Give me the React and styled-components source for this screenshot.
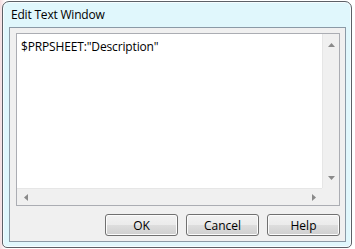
import React from "react";
import styled, { createGlobalStyle } from "styled-components";

const Global = createGlobalStyle`
  html, body { margin: 0; padding: 0; background: #ffffff; }
  body { font-family: "Open Sans", "Noto Sans", "DejaVu Sans", sans-serif; }
`;

const Page = styled.div`
  width: 355px;
  height: 249px;
  padding: 1px 3px 1px 2px;
  box-sizing: border-box;
  background: linear-gradient(90deg, #f4dde0 0px, #ffffff 6px);
`;

const Frame = styled.div`
  height: 100%;
  box-sizing: border-box;
  border: 1px solid #5c6066;
  border-radius: 7px 7px 5px 5px;
  background: #e0f7fc;
  display: flex;
  flex-direction: column;
  box-shadow: inset 0 0 0 1px #f6fdff;
`;

const TitleBar = styled.div`
  height: 25px;
  flex: none;
  display: flex;
  align-items: center;
  padding-left: 8px;
  font-size: 12px;
  letter-spacing: -0.2px;
  color: #000;
`;

const Client = styled.div`
  flex: 1;
  margin: 0 5px 5px 6px;
  border: 1px solid #8b9aa6;
  background: #f0f0f0;
  display: flex;
  flex-direction: column;
  padding: 5px 5px 5px 6px;
  gap: 8px;
`;

const EditBox = styled.div`
  flex: 1;
  border: 1px solid #abadb3;
  background: #ffffff;
  display: grid;
  grid-template-columns: 1fr 17px;
  grid-template-rows: 1fr 17px;
`;

const TextArea = styled.div`
  padding: 4px 0 0 4px;
  font-size: 12px;
  letter-spacing: -0.15px;
  color: #000;
  white-space: pre;
`;

const VScroll = styled.div`
  background: #f0f0f0;
  display: flex;
  flex-direction: column;
  justify-content: space-between;
  align-items: center;
  border-left: 1px solid #e6e6e6;
  padding: 2px 0;
`;

const HScroll = styled.div`
  background: #f0f0f0;
  display: flex;
  justify-content: space-between;
  align-items: center;
  border-top: 1px solid #e6e6e6;
`;

const Corner = styled.div`
  background: #f0f0f0;
`;

const Arrow = styled.div`
  width: 17px;
  height: 17px;
  display: flex;
  align-items: center;
  justify-content: center;
`;

const ButtonRow = styled.div`
  display: flex;
  justify-content: flex-end;
  gap: 8px;
  flex: none;
`;

const Button = styled.button`
  width: 73px;
  height: 22px;
  border: 1px solid #707070;
  border-radius: 3px;
  background: linear-gradient(#f2f2f2 0%, #ebebeb 50%, #dddddd 51%, #cfcfcf 100%);
  box-shadow: inset 0 0 0 1px #fcfcfc;
  font-family: "Open Sans", "Noto Sans", sans-serif;
  font-size: 12px;
  color: #000;
  padding: 0;
`;

const Tri = ({ dir }) => {
  const pts = {
    up: "0,4 3.5,0 7,4",
    down: "0,0 3.5,4 7,0",
    left: "4,0 0,3.5 4,7",
    right: "0,0 4,3.5 0,7",
  }[dir];
  const vert = dir === "up" || dir === "down";
  return (
    <svg width={vert ? 7 : 4} height={vert ? 4 : 7} viewBox={vert ? "0 0 7 4" : "0 0 4 7"}>
      <polygon points={pts} fill="#8a8a8a" />
    </svg>
  );
};

export default function App() {
  return (
    <>
      <Global />
      <Page>
        <Frame>
          <TitleBar>Edit Text Window</TitleBar>
          <Client>
            <EditBox>
              <TextArea>$PRPSHEET:"Description"</TextArea>
              <VScroll>
                <Arrow><Tri dir="up" /></Arrow>
                <Arrow><Tri dir="down" /></Arrow>
              </VScroll>
              <HScroll>
                <Arrow><Tri dir="left" /></Arrow>
                <Arrow><Tri dir="right" /></Arrow>
              </HScroll>
              <Corner />
            </EditBox>
            <ButtonRow>
              <Button>OK</Button>
              <Button>Cancel</Button>
              <Button>Help</Button>
            </ButtonRow>
          </Client>
        </Frame>
      </Page>
    </>
  );
}
